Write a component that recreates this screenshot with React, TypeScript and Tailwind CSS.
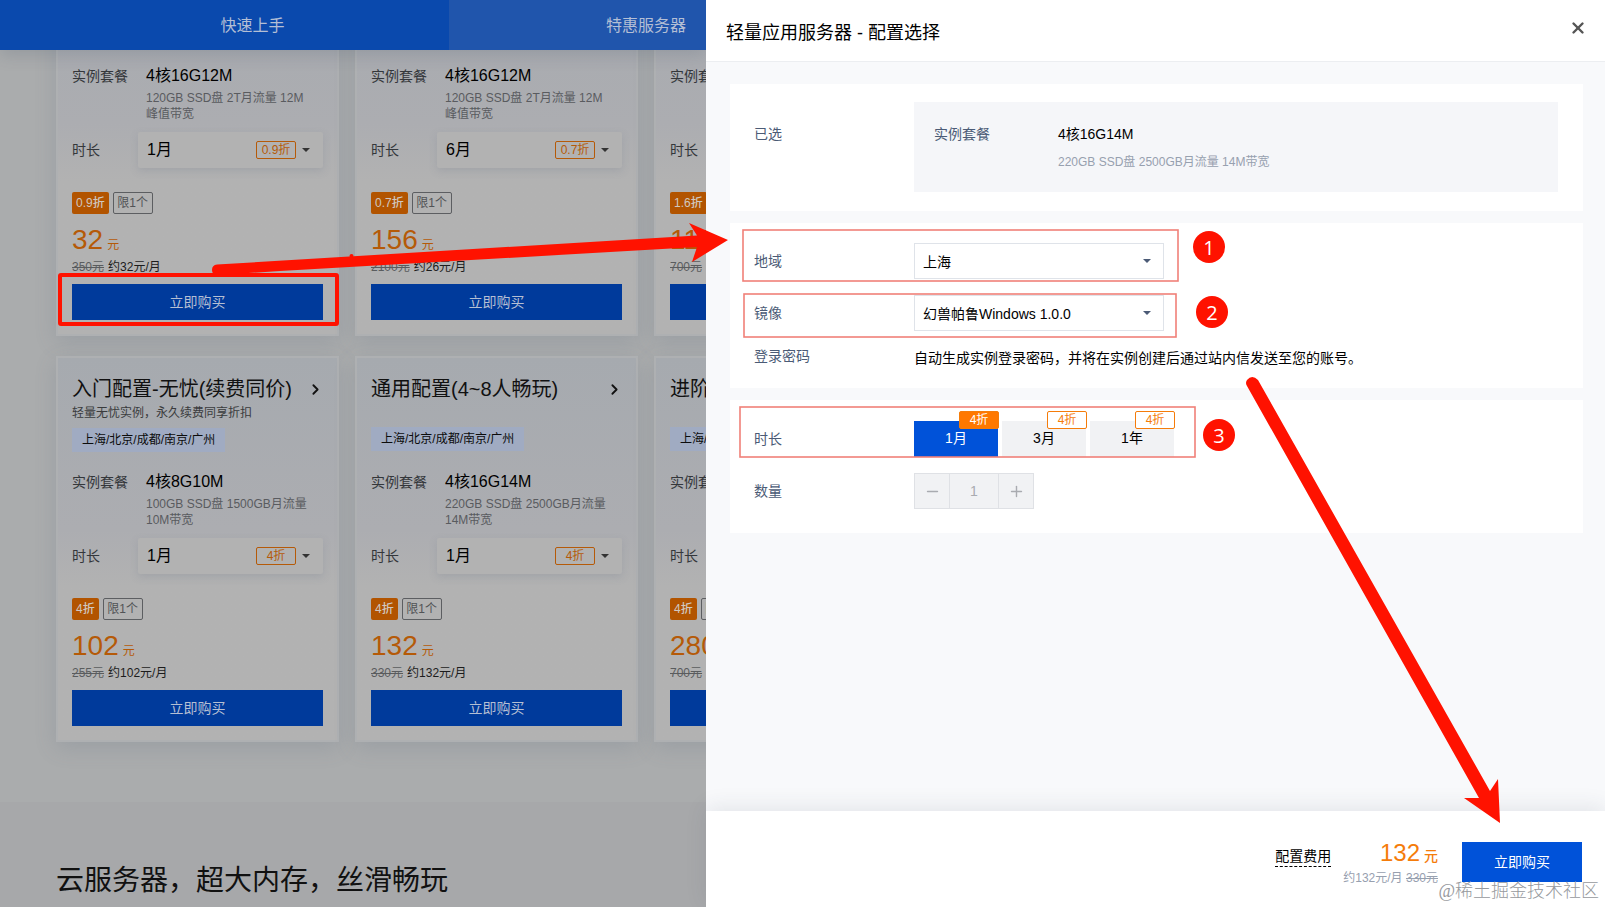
import { ChevronRight, Minus, Plus, X } from "lucide-react";

type Plan = {
  id: string;
  title?: string;
  subtitle?: string;
  regions?: string;
  spec: string;
  details: string[];
  duration: string;
  discount: string;
  price: string;
  originalPrice: string;
  monthly: string;
};

const plans: Plan[] = [
  {
    id: "starter",
    spec: "4核16G12M",
    details: ["120GB SSD盘 2T月流量 12M", "峰值带宽"],
    duration: "1月",
    discount: "0.9折",
    price: "32",
    originalPrice: "350元",
    monthly: "约32元/月",
  },
  {
    id: "starter-half-year",
    spec: "4核16G12M",
    details: ["120GB SSD盘 2T月流量 12M", "峰值带宽"],
    duration: "6月",
    discount: "0.7折",
    price: "156",
    originalPrice: "2100元",
    monthly: "约26元/月",
  },
  {
    id: "advanced",
    spec: "",
    details: [],
    duration: "",
    discount: "1.6折",
    price: "115",
    originalPrice: "700元",
    monthly: "",
  },
  {
    id: "worry-free",
    title: "入门配置-无忧(续费同价)",
    subtitle: "轻量无忧实例，永久续费同享折扣",
    regions: "上海/北京/成都/南京/广州",
    spec: "4核8G10M",
    details: ["100GB SSD盘 1500GB月流量", "10M带宽"],
    duration: "1月",
    discount: "4折",
    price: "102",
    originalPrice: "255元",
    monthly: "约102元/月",
  },
  {
    id: "general",
    title: "通用配置(4~8人畅玩)",
    regions: "上海/北京/成都/南京/广州",
    spec: "4核16G14M",
    details: ["220GB SSD盘 2500GB月流量", "14M带宽"],
    duration: "1月",
    discount: "4折",
    price: "132",
    originalPrice: "330元",
    monthly: "约132元/月",
  },
  {
    id: "advanced-plus",
    title: "进阶配置",
    regions: "上海/北京/成都/南京/广州",
    spec: "",
    details: [],
    duration: "",
    discount: "4折",
    price: "280",
    originalPrice: "700元",
    monthly: "",
  },
];

const durations = [
  { label: "1月", discount: "4折", active: true },
  { label: "3月", discount: "4折", active: false },
  { label: "1年", discount: "4折", active: false },
];

const Caret = ({ className }: { className: string }) => (
  <svg viewBox="0 0 8 4" className={`h-1 w-2 shrink-0 ${className}`} fill="currentColor">
    <path d="M0 0h8L4 4z" />
  </svg>
);

const PlanCard = ({ plan }: { plan: Plan }) => (
  <div className="flex h-[386px] w-[283px] shrink-0 flex-col border-2 border-[#aeb0b2] bg-linear-to-b from-[#a6aaaf] via-[#acadb1] via-45% to-[#b2b2b2] to-60% px-[14px] pb-[14px] shadow-[0_6px_20px_rgba(90,105,125,0.2)]">
    <div className="mt-[14px] flex h-[34px] items-center justify-between">
      <h3 className="text-[20px] leading-[34px] whitespace-nowrap text-[#111]">{plan.title}</h3>
      <ChevronRight className="-mr-px h-[17px] w-[17px] shrink-0 text-[#111]" strokeWidth={2.6} />
    </div>
    <p className={`text-[12px] leading-[14px] text-[#3a3b3d] ${plan.subtitle ? "h-[22px]" : "h-[21px]"}`}>
      {plan.subtitle}
    </p>
    <div className={`flex items-start ${plan.subtitle ? "h-[42px]" : "h-[43px]"}`}>
      {plan.regions && (
        <span className="h-6 bg-[#a0abc2] px-[10px] text-[12px] leading-[24px] whitespace-nowrap text-[#0c0c0c]">
          {plan.regions}
        </span>
      )}
    </div>
    <div className="flex h-[68px]">
      <span className="w-[74px] shrink-0 text-[14px] leading-[24px] whitespace-nowrap text-[#34373b]">实例套餐</span>
      <div className="whitespace-nowrap">
        <div className="h-[26px] text-[16px] leading-[23px] text-black">{plan.spec}</div>
        {plan.details.map((line) => (
          <div key={line} className="h-4 text-[12px] leading-[16px] text-[#595b5f]">
            {line}
          </div>
        ))}
      </div>
    </div>
    <div className="flex h-[36px] items-center">
      <span className="w-[66px] shrink-0 text-[14px] text-[#34373b]">时长</span>
      <div className="flex h-[36px] grow items-center rounded-[2px] bg-[#b2b2b2] pr-[13px] pl-[9px] shadow-[0_3px_8px_rgba(100,110,130,0.2)]">
        <span className="grow text-[16px] text-black">{plan.duration}</span>
        <span className="mr-[6px] flex h-[18px] w-10 items-center justify-center rounded-[2px] border border-[#b55a08] text-[12px] text-[#b55a08]">
          {plan.discount}
        </span>
        <Caret className="text-[#333]" />
      </div>
    </div>
    <div className="mt-6 flex h-[22px] gap-1 whitespace-nowrap">
      <span className="flex items-center rounded-[2px] bg-[#b25400] px-1 text-[12px] font-medium text-[#d0c8c0]">
        {plan.discount}
      </span>
      <span className="flex w-10 items-center justify-center rounded-[2px] border border-[#5c5e61] text-[12px] text-[#515356]">
        限1个
      </span>
    </div>
    <div className="mt-[7px] flex h-[37px] items-baseline gap-1 text-[#b55a08]">
      <span className="text-[28px] leading-[38px]">{plan.price}</span>
      <span className="text-[12px]">元</span>
    </div>
    <div className="flex h-[26px] gap-1 text-[12px] leading-[18px] whitespace-nowrap text-[#1c1c1c]">
      <span className="text-[#5a5c5e] line-through">{plan.originalPrice}</span>
      <span>{plan.monthly}</span>
    </div>
    <button type="button" className="h-9 w-full shrink-0 bg-[#003a9b] text-[14px] text-[#b5bfd3]">
      立即购买
    </button>
  </div>
);

const BackgroundPage = () => (
  <div className="flex h-[907px] w-[706px] shrink-0 flex-col overflow-hidden bg-[#a7a8aa]">
    <nav className="z-10 flex h-[50px] shrink-0 text-[16px] leading-[52px] text-[#b4bfd5] shadow-[0_6px_16px_rgba(60,75,100,0.18)]">
      <div className="w-[449px] shrink-0 bg-[#0a49ad] pl-[56px] text-center">快速上手</div>
      <div className="w-[394px] shrink-0 bg-[#2055ac] text-center">特惠服务器</div>
    </nav>
    <section className="h-[752px] shrink-0 overflow-hidden bg-[#aaacad] pl-[56px]">
      <div className="-mt-[100px] grid w-[881px] grid-cols-3 gap-x-4 gap-y-5">
        {plans.map((plan) => (
          <PlanCard key={plan.id} plan={plan} />
        ))}
      </div>
    </section>
    <section className="grow bg-[#a7a8aa] pt-[55px] pl-[56px]">
      <h2 className="text-[28px] leading-[48px] text-[#111]">云服务器，超大内存，丝滑畅玩</h2>
    </section>
  </div>
);

const Select = ({ value }: { value: string }) => (
  <div className="flex h-9 w-[250px] items-center justify-between border border-[#dfe3e9] bg-white pr-[12px] pl-[8px] text-[14px] text-black">
    <span className="pt-[2px]">{value}</span>
    <Caret className="text-[#4b5b76]" />
  </div>
);

const ConfigPanel = () => (
  <div className="z-10 flex h-[907px] grow flex-col bg-[#f8f9fb]">
    <header className="flex h-[62px] shrink-0 items-center justify-between border-b border-[#eceef1] bg-white pr-[18px] pl-5">
      <h1 className="pt-[6px] text-[18px] text-black">轻量应用服务器 - 配置选择</h1>
      <X className="mb-[6px] h-[18px] w-[18px] text-[#555]" strokeWidth={3.2} />
    </header>

    <div className="flex grow flex-col gap-3 pt-[22px] pr-[22px] pl-6 text-[14px] text-black">
      {/* Selected plan */}
      <section className="flex h-[127px] bg-white pt-[18px] pr-[25px] pl-6">
        <span className="w-[160px] shrink-0 pt-[22px] leading-[20px] text-[#4b5b76]">已选</span>
        <div className="flex h-[90px] grow bg-[#f5f6f9] pt-[22px] pl-5">
          <span className="w-[124px] leading-[20px] text-[#4b5b76]">实例套餐</span>
          <div>
            <div className="leading-[20px]">4核16G14M</div>
            <div className="mt-[9px] text-[12px] leading-[18px] text-[#97a0af]">220GB SSD盘 2500GB月流量 14M带宽</div>
          </div>
        </div>
      </section>

      {/* Region, image and password */}
      <section className="h-[165px] bg-white pt-5 pl-6">
        <div className="mb-4 flex h-9 items-center">
          <span className="w-[160px] text-[#4b5b76]">地域</span>
          <Select value="上海" />
        </div>
        <div className="flex h-9 items-center">
          <span className="w-[160px] text-[#4b5b76]">镜像</span>
          <Select value="幻兽帕鲁Windows 1.0.0" />
        </div>
        <div className="mt-[15px] flex h-6 leading-[20px]">
          <span className="w-[160px] text-[#4b5b76]">登录密码</span>
          <span className="pt-[2px]">自动生成实例登录密码，并将在实例创建后通过站内信发送至您的账号。</span>
        </div>
      </section>

      {/* Duration and quantity */}
      <section className="h-[133px] bg-white pt-[21px] pl-6">
        <div className="flex h-9 items-center">
          <span className="w-[160px] text-[#4b5b76]">时长</span>
          <div className="flex gap-1">
            {durations.map((item) => (
              <div
                key={item.label}
                className={`relative flex h-9 w-[84px] items-center justify-center pb-[2px] ${
                  item.active ? "bg-[#0052d9] text-white" : "bg-[#f1f2f4] text-black"
                }`}
              >
                {item.label}
                <span
                  className={`absolute -top-[10px] -right-px flex h-[18px] w-10 items-center justify-center rounded-[2px] border border-[#f57c0a] text-[12px] ${
                    item.active ? "bg-[#ff7800] text-white" : "bg-white text-[#f57c0a]"
                  }`}
                >
                  {item.discount}
                </span>
              </div>
            ))}
          </div>
        </div>
        <div className="mt-4 flex h-9 items-center">
          <span className="w-[160px] text-[#4b5b76]">数量</span>
          <div className="flex h-9 w-[120px] border border-[#dfe1e5] bg-[#f1f2f4] text-[#a9abb0]">
            <button type="button" className="flex w-[34px] items-center justify-center">
              <Minus className="h-[17px] w-[17px]" strokeWidth={2} />
            </button>
            <span className="flex grow items-center justify-center border-x border-[#dfe1e5]">1</span>
            <button type="button" className="flex w-[34px] items-center justify-center">
              <Plus className="h-[17px] w-[17px]" strokeWidth={2} />
            </button>
          </div>
        </div>
      </section>
    </div>

    <footer className="flex h-[96px] shrink-0 justify-end bg-white pt-[31px] pr-[23px] shadow-[0_-4px_20px_rgba(50,60,80,0.1)]">
      <span className="mt-[4px] mr-[12px] h-[21px] border-b border-dashed border-black text-[14px] leading-[20px] text-black">
        配置费用
      </span>
      <div className="-mt-[5px] mr-6 text-right">
        <div className="flex h-[32px] items-baseline justify-end gap-1 text-[#f57c0a]">
          <span className="text-[24px] leading-[32px]">132</span>
          <span className="text-[14px] font-medium">元</span>
        </div>
        <div className="text-[12px] leading-[18px] text-[#97a0af]">
          约132元/月 <span className="line-through">330元</span>
        </div>
      </div>
      <button type="button" className="h-10 w-[120px] bg-[#0052d9] text-[14px] text-white">
        立即购买
      </button>
    </footer>
  </div>
);

const Marker = ({ x, y, label }: { x: number; y: number; label: string }) => (
  <g>
    <circle cx={x} cy={y} r="16" fill="#ff1200" />
    <text x={x} y={y + 7.5} textAnchor="middle" fontSize="20" fill="#fff" fontFamily="Open Sans, Noto Sans, sans-serif">
      {label}
    </text>
  </g>
);

// Hand-drawn callouts lying over both the page and the panel
const Annotations = () => (
  <svg viewBox="0 0 1605 907" className="pointer-events-none absolute inset-0 z-20 h-[907px] w-[1605px]">
    <g fill="none" stroke="#f08078" strokeWidth="1.6">
      <rect x="743" y="230" width="435" height="51" />
      <rect x="744" y="294" width="432" height="43" />
      <rect x="740" y="407" width="455" height="50" />
    </g>
    <rect x="60" y="275" width="277" height="49" fill="none" stroke="#ff1200" strokeWidth="4" rx="1" />
    <g fill="#ff1200">
      <circle cx="351.500" cy="256" r="2" />
      <path d="M217 264.500 L697 235.500 L689 223 L728 240 L692 262 L697 247 L280 271 L217 275 Q212 275 212 270 Q212 265 217 264.500z" />
      <path d="M1247 380 Q1252 374 1258 380 L1490 791 L1498 779 L1500 823 L1464 798 L1479 798 L1247 386 Q1245 383 1247 380z" />
    </g>
    <Marker x={1209} y={247} label="1" />
    <Marker x={1212} y={312} label="2" />
    <Marker x={1219} y={435} label="3" />
  </svg>
);

export default function App() {
  return (
    <div className="relative flex h-[907px] w-[1605px] overflow-hidden font-['Liberation_Sans','Noto_Sans_CJK_SC',sans-serif]">
      <BackgroundPage />
      <ConfigPanel />
      <Annotations />
      <div className="absolute right-[6px] bottom-[3px] z-20 font-['Liberation_Serif','Noto_Sans_CJK_SC',sans-serif] text-[18px] leading-[26px] font-light text-[#96999d]">
        @稀土掘金技术社区
      </div>
    </div>
  );
}
